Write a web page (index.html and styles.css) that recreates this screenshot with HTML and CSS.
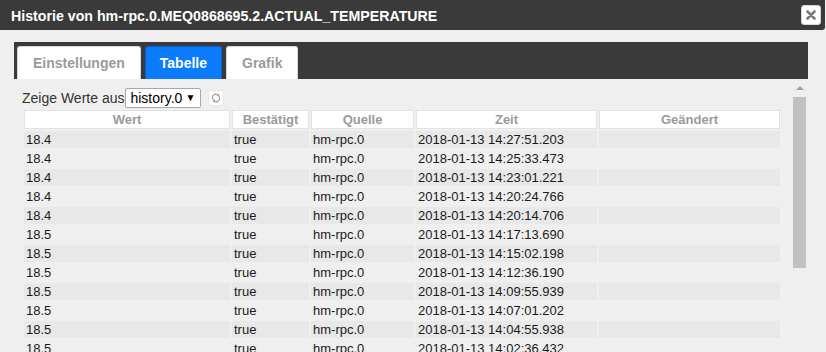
FILE: index.html
```html
<!DOCTYPE html>
<html lang="de">
<head>
<meta charset="utf-8">
<title>Historie</title>
<link rel="stylesheet" href="styles.css">
</head>
<body>
<div class="dialog">
  <div class="titlebar">
    <span class="title">Historie von hm-rpc.0.MEQ0868695.2.ACTUAL_TEMPERATURE</span>
    <button class="close" type="button" aria-label="close">
      <svg width="10" height="10" viewBox="0 0 10 10"><path d="M1.5 1.5 L8.5 8.5 M8.5 1.5 L1.5 8.5" stroke="#7a7a7a" stroke-width="2.6" stroke-linecap="round"/></svg>
    </button>
  </div>
  <div class="main">
    <div class="tabbar">
      <div class="tab">Einstellungen</div>
      <div class="tab active">Tabelle</div>
      <div class="tab">Grafik</div>
    </div>
    <div class="panel">
      <div class="content">
        <div class="source-row">
          <span class="label">Zeige Werte aus</span>
          <div class="select"><span>history.0</span><span class="caret">&#9660;</span></div>
          <button class="refresh" type="button" aria-label="refresh">
            <svg width="10" height="10" viewBox="0 0 10 10" fill="none" stroke="#9a9a9a" stroke-width="1.1">
              <path d="M2 6.2 A3.2 3.2 0 0 1 7.4 2.6"/>
              <path d="M8 3.8 A3.2 3.2 0 0 1 2.6 7.4"/>
              <path d="M7.8 1.2 L7.6 3 L5.9 2.8" />
              <path d="M2.2 8.8 L2.4 7 L4.1 7.2" />
            </svg>
          </button>
        </div>
        <table class="grid">
          <colgroup>
            <col class="c-wert"><col class="c-best"><col class="c-quelle"><col class="c-zeit"><col class="c-geae">
          </colgroup>
          <thead>
            <tr><th>Wert</th><th>Bestätigt</th><th>Quelle</th><th>Zeit</th><th>Geändert</th></tr>
          </thead>
          <tbody>
            <tr><td>18.4</td><td>true</td><td>hm-rpc.0</td><td>2018-01-13 14:27:51.203</td><td></td></tr>
            <tr><td>18.4</td><td>true</td><td>hm-rpc.0</td><td>2018-01-13 14:25:33.473</td><td></td></tr>
            <tr><td>18.4</td><td>true</td><td>hm-rpc.0</td><td>2018-01-13 14:23:01.221</td><td></td></tr>
            <tr><td>18.4</td><td>true</td><td>hm-rpc.0</td><td>2018-01-13 14:20:24.766</td><td></td></tr>
            <tr><td>18.4</td><td>true</td><td>hm-rpc.0</td><td>2018-01-13 14:20:14.706</td><td></td></tr>
            <tr><td>18.5</td><td>true</td><td>hm-rpc.0</td><td>2018-01-13 14:17:13.690</td><td></td></tr>
            <tr><td>18.5</td><td>true</td><td>hm-rpc.0</td><td>2018-01-13 14:15:02.198</td><td></td></tr>
            <tr><td>18.5</td><td>true</td><td>hm-rpc.0</td><td>2018-01-13 14:12:36.190</td><td></td></tr>
            <tr><td>18.5</td><td>true</td><td>hm-rpc.0</td><td>2018-01-13 14:09:55.939</td><td></td></tr>
            <tr><td>18.5</td><td>true</td><td>hm-rpc.0</td><td>2018-01-13 14:07:01.202</td><td></td></tr>
            <tr><td>18.5</td><td>true</td><td>hm-rpc.0</td><td>2018-01-13 14:04:55.938</td><td></td></tr>
            <tr><td>18.5</td><td>true</td><td>hm-rpc.0</td><td>2018-01-13 14:02:36.432</td><td></td></tr>
          </tbody>
        </table>
      </div>
      <div class="scrollbar">
        <div class="sb-button"><span class="sb-arrow"></span></div>
        <div class="sb-thumb"></div>
      </div>
    </div>
  </div>
</div>
</body>
</html>
```
FILE: styles.css
```css
html, body {
  margin: 0;
  padding: 0;
}
body {
  width: 826px;
  height: 352px;
  overflow: hidden;
  background: #efefef;
  font-family: "Liberation Sans", Arial, sans-serif;
  color: #222;
}
.dialog {
  display: flex;
  flex-direction: column;
}
.titlebar {
  height: 30px;
  width: 825px;
  box-sizing: border-box;
  background: #3a3a3a;
  border-radius: 0 0 3px 0;
  display: flex;
  align-items: center;
  justify-content: space-between;
  padding: 0 4px 0 11px;
}
.title {
  color: #fff;
  font-weight: bold;
  font-size: 14.2px;
  line-height: 16px;
  margin-top: 1px;
}
.close {
  width: 20px;
  height: 20px;
  padding: 0;
  margin: 0;
  border: 1px solid #d6d6d6;
  border-radius: 3px;
  background: #fff;
  display: flex;
  align-items: center;
  justify-content: center;
}
.main {
  padding: 12px 18px 0 14px;
}
.tabbar {
  height: 37px;
  box-sizing: border-box;
  background: #3a3a3a;
  padding: 4px 3px 0 3px;
  display: flex;
  gap: 4px;
}
.tab {
  height: 33px;
  box-sizing: border-box;
  padding: 0 15px;
  border: 1px solid #d8d8d8;
  border-bottom: 0;
  border-radius: 3px 3px 0 0;
  background: #fff;
  color: #9a9a9a;
  font-weight: bold;
  font-size: 14px;
  display: flex;
  align-items: center;
}
.tab.active {
  background: #0a7bfd;
  border-color: #0a5fd0;
  color: #fff;
  padding: 0 14px;
}
.panel {
  display: flex;
  align-items: flex-start;
}
.content {
  flex: 1;
  padding: 9px 9px 0 8px;
}
.source-row {
  height: 20px;
  display: flex;
  align-items: center;
}
.label {
  font-size: 14px;
  color: #333;
}
.select {
  margin-left: 1px;
  width: 76px;
  height: 20px;
  box-sizing: border-box;
  border: 1px solid #a9a9a9;
  border-radius: 2px;
  background: #fff;
  display: flex;
  align-items: center;
  justify-content: space-between;
  padding: 0 5px 0 4px;
  font-size: 14px;
  color: #000;
}
.caret {
  font-size: 10px;
  line-height: 10px;
}
.refresh {
  margin-left: 7px;
  width: 16px;
  height: 16px;
  padding: 0;
  border: 1px solid #e8e8e8;
  border-radius: 3px;
  background: #fff;
  display: flex;
  align-items: center;
  justify-content: center;
}
.grid {
  border-collapse: separate;
  border-spacing: 2px;
  table-layout: fixed;
  width: 760px;
  margin-left: 0;
  font-size: 13px;
}
.c-wert { width: 206px; }
.c-best { width: 77px; }
.c-quelle { width: 103px; }
.c-zeit { width: 181px; }
.c-geae { width: 181px; }
.grid th {
  height: 19px;
  box-sizing: border-box;
  padding: 0;
  background: #fff;
  border: 1px solid #e3e3e3;
  color: #9a9a9a;
  font-weight: bold;
  font-size: 13px;
  text-align: center;
  line-height: 16px;
}
.grid td {
  height: 17px;
  box-sizing: border-box;
  padding: 0 0 0 2px;
  line-height: 17px;
  color: #1a1a1a;
  white-space: nowrap;
  overflow: hidden;
}
.grid tbody tr:nth-child(odd) td {
  background: #e8e8e8;
}
.scrollbar {
  width: 17px;
  display: flex;
  flex-direction: column;
  align-items: center;
}
.sb-button {
  height: 18px;
  width: 17px;
  display: flex;
  align-items: center;
  justify-content: center;
}
.sb-arrow {
  width: 0;
  height: 0;
  border-left: 4px solid transparent;
  border-right: 4px solid transparent;
  border-bottom: 4px solid #a3a3a3;
}
.sb-thumb {
  width: 13px;
  height: 171px;
  background: #c1c1c1;
}
```
